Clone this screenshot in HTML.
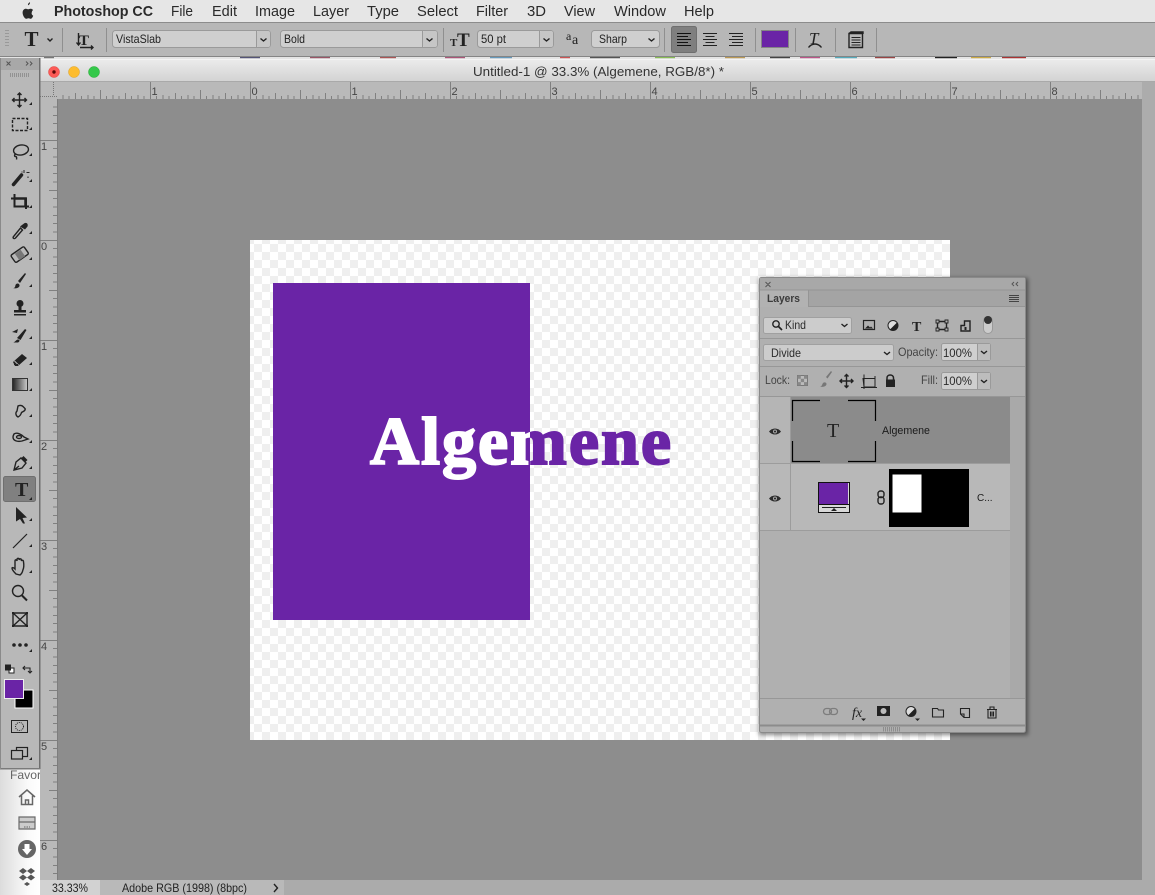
<!DOCTYPE html>
<html><head><meta charset="utf-8"><style>
html,body{margin:0;padding:0;background:#8d8d8d;width:1155px;height:895px;overflow:hidden}
svg{display:block;position:absolute;left:0;top:0}
text{font-family:"Liberation Sans",sans-serif;fill:#262626}
.m{font-size:15px;fill:#2a2a2a}
.o{font-size:12px;fill:#222}
.r{font-size:11px;fill:#444}
.p{font-size:12px;fill:#2b2b2b}
.i{fill:none;stroke:#222;stroke-width:1.4}
.f{fill:#222;stroke:none}
.n{fill:#222;font-family:"Liberation Serif",serif;font-weight:bold}
</style></head><body>
<svg width="1155" height="895" viewBox="0 0 1155 895" xmlns="http://www.w3.org/2000/svg">
<defs>
<pattern id="ck" x="254" y="244" width="16" height="16" patternUnits="userSpaceOnUse"><rect width="16" height="16" fill="#fff"/><rect width="8" height="8" fill="#efefef"/><rect x="8" y="8" width="8" height="8" fill="#efefef"/></pattern>
<pattern id="rt" x="50" y="82" width="100" height="17" patternUnits="userSpaceOnUse">
<rect width="100" height="17" fill="#b9b9b9"/>
<path d="M.5 0V17M50.5 8V17M25.5 11V17M75.5 11V17M13 13V17M38 13V17M63 13V17M88 13V17M6.5 14V17M19 14V17M31.5 14V17M44 14V17M56.5 14V17M69 14V17M81.5 14V17M94 14V17" stroke="#808080" stroke-width="1" fill="none"/></pattern>
<pattern id="rl" x="40" y="40" width="17" height="100" patternUnits="userSpaceOnUse">
<rect width="17" height="100" fill="#b9b9b9"/>
<path d="M0 .5H17M9 50.500H17M13 8.500H17M13 17H17M13 25.500H17M13 33.500H17M13 42H17M13 58.500H17M13 67H17M13 75.500H17M13 83.500H17M13 92H17" stroke="#808080" stroke-width="1" fill="none"/></pattern>
<linearGradient id="tb" x1="0" y1="0" x2="0" y2="1"><stop offset="0" stop-color="#ececec"/><stop offset="1" stop-color="#d2d2d2"/></linearGradient>
<linearGradient id="sb" x1="0" y1="0" x2="1" y2="0"><stop offset="0" stop-color="#dcdcdc"/><stop offset=".7" stop-color="#fafafa"/><stop offset="1" stop-color="#fff"/></linearGradient>
<linearGradient id="gr" x1="0" y1="0" x2="1" y2="0"><stop offset="0" stop-color="#222"/><stop offset="1" stop-color="#ccc"/></linearGradient>
<filter id="sh" x="-5%" y="-5%" width="110%" height="110%"><feGaussianBlur stdDeviation="2"/></filter>
<clipPath id="cl"><rect x="300" y="380" width="230" height="120"/></clipPath>
<clipPath id="cr"><rect x="530" y="380" width="230" height="120"/></clipPath>
<clipPath id="fav"><rect x="0" y="768" width="40" height="127"/></clipPath>
</defs>

<!-- base -->
<rect width="1155" height="895" fill="#8d8d8d"/>

<!-- menu bar -->
<rect width="1155" height="22" fill="#e6e6e6"/>
<rect y="22" width="1155" height="1" fill="#8c8c8c"/>
<path d="M28 5.200c-.2-1.400.8-2.600 2-3 .2 1.400-.8 2.700-2 3zM31.800 12.300c.1-1.500 1.200-2.200 1.300-2.300-.8-1.100-1.900-1.300-2.400-1.300-1.100-.1-1.900.6-2.500.6-.6 0-1.300-.6-2.300-.6-1.600 0-3.300 1.300-3.300 3.900 0 2.600 2 6.200 3.700 6.200.8 0 1.200-.6 2.200-.6 1 0 1.300.6 2.200.6 1.100 0 2.100-1.900 2.500-3.100-1.300-.5-1.600-1.700-1.600-2.400z" fill="#2a2a2a"/>
<text x="54" y="16" class="m" textLength="99" lengthAdjust="spacingAndGlyphs" style="font-weight:bold">Photoshop CC</text>
<text x="171" y="16" class="m" textLength="22" lengthAdjust="spacingAndGlyphs">File</text>
<text x="212" y="16" class="m" textLength="25" lengthAdjust="spacingAndGlyphs">Edit</text>
<text x="255" y="16" class="m" textLength="40" lengthAdjust="spacingAndGlyphs">Image</text>
<text x="313" y="16" class="m" textLength="36" lengthAdjust="spacingAndGlyphs">Layer</text>
<text x="367" y="16" class="m" textLength="32" lengthAdjust="spacingAndGlyphs">Type</text>
<text x="417" y="16" class="m" textLength="41" lengthAdjust="spacingAndGlyphs">Select</text>
<text x="476" y="16" class="m" textLength="32" lengthAdjust="spacingAndGlyphs">Filter</text>
<text x="527" y="16" class="m" textLength="19" lengthAdjust="spacingAndGlyphs">3D</text>
<text x="564" y="16" class="m" textLength="31" lengthAdjust="spacingAndGlyphs">View</text>
<text x="614" y="16" class="m" textLength="52" lengthAdjust="spacingAndGlyphs">Window</text>
<text x="684" y="16" class="m" textLength="30" lengthAdjust="spacingAndGlyphs">Help</text>

<!-- options bar -->
<rect y="23" width="1155" height="33" fill="#b7b7b7"/>
<rect y="56" width="1155" height="1" fill="#858585"/>
<rect y="57" width="1155" height="2" fill="#e4e4e4"/>
<g>
<rect x="44" y="57" width="10" height="1.200" fill="#777"/><rect x="240" y="57" width="20" height="1.200" fill="#557"/><rect x="310" y="57" width="20" height="1.200" fill="#956"/><rect x="380" y="57" width="16" height="1.200" fill="#a55"/><rect x="445" y="57" width="20" height="1.200" fill="#a57"/><rect x="490" y="57" width="22" height="1.200" fill="#69b"/><rect x="560" y="57" width="10" height="1.200" fill="#c55"/><rect x="590" y="57" width="30" height="1.200" fill="#555"/><rect x="655" y="57" width="20" height="1.200" fill="#8b5"/><rect x="725" y="57" width="20" height="1.200" fill="#b95"/><rect x="770" y="57" width="20" height="1.200" fill="#444"/><rect x="800" y="57" width="20" height="1.200" fill="#b58"/><rect x="835" y="57" width="22" height="1.200" fill="#5ab"/><rect x="875" y="57" width="20" height="1.200" fill="#944"/><rect x="935" y="57" width="22" height="1.200" fill="#222"/><rect x="971" y="57" width="20" height="1.200" fill="#ca4"/><rect x="1002" y="57" width="24" height="1.200" fill="#a33"/>
</g>
<!-- grip -->
<path d="M5 30.500H9M5 33.500H9M5 36.500H9M5 39.500H9M5 42.500H9M5 45.500H9" stroke="#999" fill="none"/>
<!-- T tool -->
<text x="24.500" y="46" class="n" style="font-size:21px">T</text>
<path d="M47.500 38.500l2.500 2.500 2.500-2.500" class="i" stroke-width="1"/>
<path d="M62.500 28V52M106.500 28V52M443.500 28V52M664.500 28V52M755.500 28V52M795.500 28V52M835.500 28V52M876.500 28V52" stroke="#8f8f8f" fill="none"/>
<text x="79" y="45" class="n" style="font-size:15px">T</text>
<path d="M78.500 33V45M76.500 42.500l2 2.500 2-2.500M80 47.500H93M91 45.500l2 2-2 2" class="i" stroke-width="1.100"/>
<!-- combos -->
<g fill="#cfcfcf" stroke="#9a9a9a">
<rect x="112.500" y="30.500" width="158" height="17" rx="3"/>
<rect x="280.500" y="30.500" width="157" height="17" rx="3"/>
<rect x="477.500" y="30.500" width="76" height="17" rx="3"/>
<rect x="591.500" y="30.500" width="68" height="17" rx="3"/>
</g>
<path d="M256.500 31V47M422.500 31V47M539.500 31V47" stroke="#9a9a9a" fill="none"/>
<rect x="257" y="31" width="13" height="16" rx="2" fill="#c6c6c6"/><rect x="423" y="31" width="14" height="16" rx="2" fill="#c6c6c6"/><rect x="540" y="31" width="13" height="16" rx="2" fill="#c6c6c6"/>
<path d="M260.500 38.500l3 2.500 3-2.500M426.500 38.500l3 2.500 3-2.500M543.500 38.500l3 2.500 3-2.500M648.500 38.500l3 2.500 3-2.500" class="i" stroke-width="1"/>
<text x="116" y="43" class="o" textLength="45" lengthAdjust="spacingAndGlyphs">VistaSlab</text>
<text x="284" y="43" class="o" textLength="21" lengthAdjust="spacingAndGlyphs">Bold</text>
<text x="481" y="43" class="o" textLength="25" lengthAdjust="spacingAndGlyphs">50 pt</text>
<text x="599" y="43" class="o" textLength="28" lengthAdjust="spacingAndGlyphs">Sharp</text>
<!-- TT size -->
<text x="450" y="46" class="n" style="font-size:11px">T</text>
<text x="457" y="46" class="n" style="font-size:19px">T</text>
<!-- aa -->
<text x="566" y="40" class="o" style="font-family:'Liberation Serif',serif;font-size:12px">a</text>
<text x="572" y="44" class="o" style="font-family:'Liberation Serif',serif;font-size:14px">a</text>
<!-- align -->
<rect x="671.500" y="26.500" width="25" height="26" rx="2" fill="#7f7f7f" stroke="#6f6f6f"/>
<path d="M677 33.500H691M677 36.500H688M677 39.500H691M677 42.500H688M677 45.500H691" stroke="#111" fill="none"/>
<path d="M703 33.500H717M705.500 36.500H714.500M703 39.500H717M705.500 42.500H714.500M703 45.500H717" stroke="#222" fill="none"/>
<path d="M729 33.500H743M732 36.500H743M729 39.500H743M732 42.500H743M729 45.500H743" stroke="#222" fill="none"/>
<!-- swatch -->
<rect x="761.500" y="30.500" width="27" height="17" fill="#6a24a6" stroke="#858585"/>
<!-- warp -->
<text x="809" y="44" class="o" style="font-family:'Liberation Serif',serif;font-size:17px;font-style:italic">T</text>
<path d="M808.500 47.500c2-2.500 4-3.500 6.500-3.500s4.500 1 6.500 3.500" class="i" stroke-width="1.200"/>
<!-- char panel -->
<path d="M849 33.500H862.500V47.500H849ZM849 33.500l2-1.500H863v2" class="i"/>
<path d="M851.500 37.500H860.500M851.500 40H860.500M851.500 42.500H860.500M851.500 45H860.500" stroke="#222" fill="none"/>

<!-- document window -->
<rect x="40" y="59" width="1115" height="23" fill="url(#tb)"/>
<rect x="40" y="59" width="1115" height="1" fill="#f4f4f4"/>
<rect x="40" y="81" width="1115" height="1" fill="#a9a9a9"/>
<circle cx="54" cy="72" r="5.500" fill="#fc5b57" stroke="#e0443e" stroke-width=".5"/><circle cx="54" cy="72" r="1.700" fill="#5a0a08"/>
<circle cx="74" cy="72" r="5.500" fill="#fdbc2e" stroke="#dea123" stroke-width=".5"/>
<circle cx="94" cy="72" r="5.500" fill="#34c84a" stroke="#27aa35" stroke-width=".5"/>
<text x="473" y="76" style="font-size:13px;fill:#333" textLength="251" lengthAdjust="spacingAndGlyphs">Untitled-1 @ 33.3% (Algemene, RGB/8*) *</text>

<!-- rulers -->
<rect x="1142" y="82" width="13" height="798" fill="#acacac"/>
<rect x="57" y="82" width="1085" height="17" fill="url(#rt)"/>
<rect x="40" y="99" width="17" height="781" fill="url(#rl)"/>
<rect x="40" y="82" width="17" height="17" fill="#b9b9b9"/>
<path d="M53.500 82V96M40 96.500H57" stroke="#777" stroke-dasharray="1 1" fill="none"/>
<rect x="57" y="99" width="1" height="781" fill="#7d7d7d"/>
<g class="r">
<text x="151.500" y="95" class="r">1</text><text x="251.500" y="95" class="r">0</text><text x="351.500" y="95" class="r">1</text><text x="451.500" y="95" class="r">2</text><text x="551.500" y="95" class="r">3</text><text x="651.500" y="95" class="r">4</text><text x="751.500" y="95" class="r">5</text><text x="851.500" y="95" class="r">6</text><text x="951.500" y="95" class="r">7</text><text x="1051.500" y="95" class="r">8</text>
<text x="41" y="150" class="r">1</text><text x="41" y="250" class="r">0</text><text x="41" y="350" class="r">1</text><text x="41" y="450" class="r">2</text><text x="41" y="550" class="r">3</text><text x="41" y="650" class="r">4</text><text x="41" y="750" class="r">5</text><text x="41" y="850" class="r">6</text>
</g>

<!-- canvas doc -->
<rect x="250" y="240" width="700" height="500" fill="url(#ck)"/>
<rect x="273" y="283" width="257" height="337" fill="#6a24a6"/>
<text x="370" y="464" textLength="301" clip-path="url(#cl)" style="font-family:'Liberation Serif',serif;font-weight:bold;font-size:68px;fill:#fff;stroke:#fff;stroke-width:2">Algemene</text>
<text x="370" y="464" textLength="301" clip-path="url(#cr)" style="font-family:'Liberation Serif',serif;font-weight:bold;font-size:68px;fill:#6a24a6;stroke:#6a24a6;stroke-width:2">Algemene</text>

<!-- status bar -->
<rect x="40" y="880" width="1115" height="15" fill="#ababab"/>
<rect x="40" y="880" width="60" height="15" fill="#d2d2d2"/>
<rect x="100" y="880" width="184" height="15" fill="#b9b9b9"/>
<text x="52" y="892" class="o" textLength="36" lengthAdjust="spacingAndGlyphs">33.33%</text>
<text x="122" y="892" class="o" textLength="125" lengthAdjust="spacingAndGlyphs">Adobe RGB (1998) (8bpc)</text>
<path d="M274 884l3.500 4-3.500 4" class="i" stroke-width="1.200"/>

<!-- sidebar -->
<rect x="0" y="768" width="40" height="127" fill="url(#sb)"/>
<g clip-path="url(#fav)">
<text x="10" y="779" style="font-size:12px;fill:#666" textLength="50" lengthAdjust="spacingAndGlyphs">Favorites</text>
</g>
<path d="M19 797L27 790 35 797M21.500 795.500V804.500H32.500V795.500M25.500 804.500V800H28.500V804.500" fill="none" stroke="#666" stroke-width="1.500"/>
<path d="M19 817h16v12H19zM19 822H35" fill="#ccc" stroke="#6a6a6a" stroke-width="1.200"/><path d="M24 827h6" stroke="#666" stroke-dasharray="1.500 1"/>
<circle cx="27" cy="849" r="9" fill="#666"/><path d="M24.500 844H29.500V849H32L27 855 22 849H24.500Z" fill="#fff"/>
<path d="M23 868l4 3-4 3-4-3zM31 868l4 3-4 3-4-3zM23 874.500l4 3-4 3-4-3zM31 874.500l4 3-4 3-4-3zM27 882l3 2-3 2-3-2z" fill="#555"/>

<!-- tools panel -->
<rect x="0" y="58" width="39" height="710" fill="#b8b8b8"/>
<rect x="0" y="58" width="39" height="12" fill="#a8a8a8"/>
<rect x="39" y="58" width="1.500" height="711" fill="#6e6e6e"/>
<rect x="0" y="768" width="40" height="1.500" fill="#7a7a7a"/>
<rect x="0" y="58" width="1" height="711" fill="#8a8a8a"/>
<path d="M6.500 61.500l4 4M10.500 61.500l-4 4M26 61.500l2 2-2 2M30 61.500l2 2-2 2" stroke="#555" fill="none"/>
<path d="M10.500 73V77M12.500 73V77M14.500 73V77M16.500 73V77M18.500 73V77M20.500 73V77M22.500 73V77M24.500 73V77M26.500 73V77M28.500 73V77" stroke="#929292" fill="none"/>

<!-- tool corner marks -->
<path d="M32 102v3h-3zM32 127v3h-3zM32 153v3h-3zM32 179v3h-3zM32 205v3h-3zM32 231v3h-3zM32 257v3h-3zM32 284v3h-3zM32 310v3h-3zM32 336v3h-3zM32 362v3h-3zM32 388v3h-3zM32 414v3h-3zM32 440v3h-3zM32 466v3h-3zM32 492v3h-3zM32 518v3h-3zM32 544v3h-3zM32 570v3h-3zM32 649v3h-3zM32 757v3h-3z" fill="#222"/>

<!-- move -->
<path d="M19.500 93V107M12.500 100H26.500M17.500 95l2-2 2 2M17.500 105l2 2 2-2M14.500 98l-2 2 2 2M24.500 98l2 2-2 2" class="i"/>
<!-- marquee -->
<rect x="12.500" y="118.500" width="15" height="12" class="i" stroke-dasharray="3 1.500"/>
<!-- lasso -->
<ellipse cx="21" cy="150" rx="7.500" ry="5" class="i" transform="rotate(-10 21 150)"/><path d="M15.500 154c-1.500 1-1 2.500 0 2.500s1.500 1 1 3" class="i"/>
<!-- wand -->
<path d="M13.500 184.500L21.500 175" stroke="#222" stroke-width="3.500" stroke-linecap="round" fill="none"/><path d="M24 170v3M26.500 172.500h3M22 171.500v1M28 176.500v1.500" stroke="#222" fill="none"/>
<!-- crop -->
<path d="M11 198.500H26V209M14.500 194V206.500H29" fill="none" stroke="#222" stroke-width="2"/><path d="M14.500 198.500H25.500V206" fill="none" stroke="#222" stroke-width="2.500"/>
<!-- eyedropper -->
<path d="M14 236c-2 2 0 3.500 1.500 2l7-8-2-2z" class="i"/><path d="M20 226.500l5 3 2.500-3c1-3-1.500-4.500-3.500-3z" class="f"/>
<!-- heal -->
<rect x="12" y="250" width="16" height="9" rx="1.500" transform="rotate(-35 20 255)" class="i"/><rect x="16.500" y="251" width="7" height="8" transform="rotate(-35 20 255)" fill="#777"/>
<!-- brush -->
<path d="M18 281l7-8 1 1-6 9z" class="f"/><path d="M13 288c2 0 2-1 2.500-3 .8-2 3.500-2 4 0 .5 2.500-3 4-6.500 3z" class="f"/>
<!-- stamp -->
<circle cx="20" cy="303.500" r="3.500" class="f"/><path d="M18.500 306h3v4h4.500v2.500H14V310h4.500zM14 314h12v1.500H14z" class="f"/>
<!-- history brush -->
<path d="M17 338l8-9 1.500 1-6 10zM13 342.500c2 0 3-3 5-3s2 2 0 3z" class="f"/><path d="M12 332l6-3 -1 4zM27 335v1M28 339v1" class="f"/>
<!-- eraser -->
<path d="M13 362l9-8 5 4-9 8h-3z" class="f"/><path d="M14.500 361l4 4" stroke="#b8b8b8" fill="none"/><path d="M14 364.500l4 0" stroke="#222" fill="none"/>
<!-- gradient -->
<rect x="12.500" y="378.500" width="15" height="12" fill="url(#gr)" stroke="#333"/>
<!-- smudge -->
<path d="M18 417c-2-1-3-4-1-6l1-5c2-1 4-.5 5 .5l2 2c1 2-2 3-3.500 4-.5 2-1.500 3.500-3.500 4.500z" class="i"/>
<!-- dodge -->
<path d="M14 434c3-2 7 0 10 3l4 2-6 2c-4 1-9 0-9-4 0-1 .5-2 1-3z" class="i"/><ellipse cx="19" cy="437" rx="2.500" ry="1.500" class="i"/>
<!-- pen -->
<path d="M14 470l2-8 5-4 5 5-4 5zM14 470l5-4" class="i"/><path d="M21.500 458l2-2 4 4-2 2z" class="f"/>
<!-- type selected -->
<rect x="3.500" y="476.500" width="32" height="25" rx="2" fill="#808080" stroke="#6f6f6f"/>
<text x="15" y="496" class="n" style="font-size:20px">T</text>
<path d="M32 497v3h-3z" fill="#222"/>
<!-- direct select -->
<path d="M16 507L27 517.500 22.500 518 25 523.500H23L20 519 16 521.500Z" class="f"/>
<!-- line -->
<path d="M13 548L27 534" stroke="#222" stroke-width="1.200" fill="none"/>
<!-- hand -->
<path d="M16 574c-2-2-4-4-4-6 .5-1 2 0 3 1v-8c0-1.500 1.800-1.500 2 0v-1.500c.2-1.500 2-1.500 2.200 0v.5c.2-1.500 2-1.500 2.200 0v1c.3-1 1.800-1 2 0 .5 3 .5 7-.5 9-.4 2-1.500 4-2.900 5z" class="i" stroke-width="1.200"/>
<!-- zoom -->
<circle cx="18" cy="591" r="5.500" class="i"/><path d="M22 595.500L27 600.500" stroke="#222" stroke-width="2" fill="none"/>
<!-- frame -->
<path d="M13 613H27V626H13ZM13 613L27 626M27 613L13 626" class="i" stroke-width="1.200"/><path d="M12 612h2v2h-2zM26 612h2v2h-2zM12 625h2v2h-2zM26 625h2v2h-2z" class="f"/>
<!-- dots -->
<circle cx="14" cy="645" r="1.800" class="f"/><circle cx="20" cy="645" r="1.800" class="f"/><circle cx="26" cy="645" r="1.800" class="f"/>
<!-- default/switch -->
<rect x="9" y="668" width="5" height="5" fill="#fff" stroke="#222"/><rect x="5" y="664.500" width="6" height="6" fill="#222"/>
<path d="M23 668H30V672M25 666l-2 2 2 2M28 671l2 2 2-2" fill="none" stroke="#222" stroke-width="1.100"/>
<!-- colors -->
<rect x="15" y="690" width="18" height="18" fill="#000" stroke="#fff"/>
<rect x="4.500" y="679.500" width="19" height="19" fill="#6a24a6" stroke="#eee"/>
<!-- quick mask -->
<rect x="11.500" y="720.500" width="16" height="12" fill="#b8b8b8" stroke="#222"/><circle cx="19.500" cy="726.500" r="4" fill="none" stroke="#222" stroke-dasharray="1 1"/>
<!-- screen mode -->
<rect x="16.500" y="747.500" width="11" height="9" fill="none" stroke="#222" stroke-width="1.200"/><rect x="11.500" y="750.500" width="11" height="8.500" fill="#b8b8b8" stroke="#222" stroke-width="1.200"/>

<!-- Layers panel -->
<rect x="759" y="278" width="269" height="457" fill="#000" opacity=".45" filter="url(#sh)"/>
<rect x="759.500" y="277.500" width="266" height="455" rx="2" fill="#b0b0b0" stroke="#8a8a8a"/>
<rect x="760" y="278" width="265" height="12" fill="#a8a8a8"/>
<path d="M765.500 282l5 5M770.500 282l-5 5M1014 282l-2 2 2 2M1018 282l-2 2 2 2" stroke="#555" fill="none"/>
<rect x="760" y="290" width="265" height="17" fill="#a4a4a4"/>
<rect x="760" y="290" width="48" height="17" fill="#b2b2b2"/>
<path d="M808.500 290V307M808 306.500H1025M760 290H1025" stroke="#959595" fill="none"/>
<text x="767" y="302" style="font-size:11px;font-weight:bold;fill:#3b3b3b" textLength="33" lengthAdjust="spacingAndGlyphs">Layers</text>
<path d="M1009 295.500H1019M1009 297.500H1019M1009 299.500H1019M1009 301.500H1019" stroke="#444" fill="none"/>
<!-- filter row -->
<path d="M760 338.500H1025M760 366.500H1025M760 396.500H1025M760 698.500H1025" stroke="#979797" fill="none"/>
<rect x="763.500" y="317.500" width="88" height="16" rx="2" fill="#cccccc" stroke="#a0a0a0"/>
<circle cx="776" cy="324" r="3.200" class="i"/><path d="M778.500 326.500L782 330" stroke="#222" stroke-width="1.700"/>
<text x="785" y="329" class="p" textLength="21" lengthAdjust="spacingAndGlyphs">Kind</text>
<path d="M841.500 324l3 2.500 3-2.500" class="i" stroke-width="1"/>
<rect x="863.500" y="320.500" width="11" height="9" fill="none" stroke="#222" stroke-width="1.200"/><path d="M865 328.500l3-3 2 2 1-1 2 2z" class="f"/>
<circle cx="893" cy="325.500" r="5" fill="#ddd" stroke="#222"/><path d="M897 322.500A5 5 0 0 1 890 329.500Z" fill="#222"/>
<text x="912" y="331" class="n" style="font-size:14px">T</text>
<path d="M937.500 321.500H946.500V329.500H937.500Z" class="i"/><path d="M936 320h3v3h-3zM945 320h3v3h-3zM936 328h3v3h-3zM945 328h3v3h-3z" fill="#b0b0b0" stroke="#222" stroke-width=".9"/>
<path d="M964.500 321H970V331H961V325.500H964.500ZM964.500 321V325.500" class="i" stroke-width="1.200"/><rect x="964.500" y="327" width="2" height="3" fill="#222"/>
<rect x="983.500" y="316.500" width="9" height="17" rx="4.500" fill="#ccc" stroke="#999"/><circle cx="988" cy="320" r="4" fill="#333"/>
<!-- blend row -->
<rect x="763.500" y="344.500" width="130" height="16" rx="2" fill="#cccccc" stroke="#a0a0a0"/>
<text x="771" y="357" class="p" textLength="30" lengthAdjust="spacingAndGlyphs">Divide</text>
<path d="M884 352l3 2.500 3-2.500" class="i" stroke-width="1"/>
<text x="898" y="356" class="p" textLength="40" lengthAdjust="spacingAndGlyphs" style="fill:#444">Opacity:</text>
<rect x="941.500" y="343.500" width="49" height="17" rx="2" fill="#cfcfcf" stroke="#9a9a9a"/><path d="M977.500 344V360" stroke="#999"/><rect x="978" y="344" width="12" height="16" fill="#bdbdbd"/>
<text x="943" y="357" class="p" textLength="29" lengthAdjust="spacingAndGlyphs">100%</text>
<path d="M981 351l3 2.500 3-2.500" class="i" stroke-width="1"/>
<!-- lock row -->
<text x="765" y="384" class="p" textLength="25" lengthAdjust="spacingAndGlyphs" style="fill:#444">Lock:</text>
<rect x="797.500" y="375.500" width="10" height="10" fill="#bbb" stroke="#777"/><path d="M797.500 375.500h3.300v3.300h-3.300zM804 375.500h3.300v3.300h-3.300zM800.800 378.800h3.300v3.300h-3.300zM797.500 382.100h3.300v3.300h-3.300zM804 382.100h3.300v3.300h-3.300z" fill="#888"/>
<path d="M826 377l5-6 1 1-4.500 6.500zM820 386.500c2 0 2-2 3-3.500 1-1 3.500-1 3.500 1 0 2-3 3.500-6.500 2.500z" fill="#777"/>
<path d="M846.500 374.500V387.500M840 381H853M844.500 376.500l2-2 2 2M844.500 385.500l2 2 2-2M842 379l-2 2 2 2M851 379l2 2-2 2" class="i" stroke-width="1.200"/>
<path d="M863 378.500H875V387H864ZM861 387.500H877M864 374.500V389M875 376V381" fill="none" stroke="#222" stroke-width="1"/>
<path d="M887 380v-2c0-4 6.500-4 6.500 0v2" fill="none" stroke="#222" stroke-width="1.500"/><rect x="886" y="379.500" width="9" height="7.500" fill="#222"/>
<text x="921" y="384" class="p" textLength="17" lengthAdjust="spacingAndGlyphs" style="fill:#444">Fill:</text>
<rect x="941.500" y="372.500" width="49" height="17" rx="2" fill="#cfcfcf" stroke="#9a9a9a"/><path d="M977.500 373V389" stroke="#999"/><rect x="978" y="373" width="12" height="16" fill="#bdbdbd"/>
<text x="943" y="385" class="p" textLength="29" lengthAdjust="spacingAndGlyphs">100%</text>
<path d="M981 380l3 2.500 3-2.500" class="i" stroke-width="1"/>
<!-- layers list -->
<rect x="1010" y="397" width="15" height="301" fill="#a9a9a9"/>
<rect x="760" y="397" width="31" height="66" fill="#b5b5b5"/>
<rect x="791" y="397" width="219" height="66" fill="#8b8b8b"/>
<rect x="760" y="464" width="250" height="66" fill="#b8b8b8"/>
<path d="M760 463.500H1010M760 530.500H1010M790.500 397V530" stroke="#9c9c9c" fill="none"/>
<!-- eyes -->
<path d="M769 431.500c3-4 9-4 12 0-3 4-9 4-12 0z" fill="#2c2c2c"/><circle cx="775" cy="431.500" r="2" fill="#aaa"/><circle cx="775" cy="431.500" r="1" fill="#222"/>
<path d="M769 498.500c3-4 9-4 12 0-3 4-9 4-12 0z" fill="#2c2c2c"/><circle cx="775" cy="498.500" r="2" fill="#aaa"/><circle cx="775" cy="498.500" r="1" fill="#222"/>
<!-- T thumb -->
<path d="M792.500 421V400.500H820M848 400.500H875.500V421M792.500 441V461.500H820M848 461.500H875.500V441" fill="none" stroke="#000" stroke-width="1.200"/>
<text x="827" y="437" style="font-family:'Liberation Serif',serif;font-size:20px;fill:#222">T</text>
<text x="882" y="434" style="font-size:11px;fill:#1a1a1a" textLength="48" lengthAdjust="spacingAndGlyphs">Algemene</text>
<!-- fill thumb -->
<rect x="818.500" y="482.500" width="31" height="30" fill="#d8d8d8" stroke="#111"/>
<rect x="819" y="483" width="29" height="21" fill="#6a24a6"/>
<path d="M822 507.500H846" stroke="#222" fill="none"/><path d="M834 508l3 3h-6z" fill="#222"/>
<path d="M818 504.500H850" stroke="#111" fill="none"/>
<!-- chain -->
<rect x="878" y="491" width="6" height="6.500" rx="2.500" fill="none" stroke="#222" stroke-width="1.400"/><rect x="878" y="497" width="6" height="7" rx="2.500" fill="none" stroke="#222" stroke-width="1.400"/>
<!-- mask -->
<rect x="889" y="469" width="80" height="58" fill="#000"/>
<rect x="892.500" y="474.500" width="29" height="38" fill="#fff"/>
<text x="977" y="501" style="font-size:10px;fill:#1a1a1a">C...</text>
<!-- bottom bar -->
<path d="M760 725.500H1025" stroke="#8c8c8c" stroke-width="2" fill="none"/>
<path d="M883.500 727V731.500M885.500 727V731.500M887.500 727V731.500M889.500 727V731.500M891.500 727V731.500M893.500 727V731.500M895.500 727V731.500M897.500 727V731.500M899.500 727V731.500" stroke="#8d8d8d" fill="none"/>
<rect x="823.500" y="708.500" width="8" height="6" rx="3" fill="none" stroke="#7d7d7d" stroke-width="1.300"/><rect x="829.500" y="708.500" width="8" height="6" rx="3" fill="none" stroke="#7d7d7d" stroke-width="1.300"/>
<text x="852" y="717" style="font-family:'Liberation Serif',serif;font-style:italic;font-size:14px;fill:#222">fx</text>
<path d="M861 718.500h5l-2.500 2.500z" fill="#222"/>
<rect x="877" y="706" width="13" height="10" fill="#222"/><circle cx="883.500" cy="711" r="3" fill="#bbb"/>
<circle cx="911" cy="711.500" r="5" fill="#ddd" stroke="#222"/><path d="M915 708.500A5 5 0 0 1 908 715.500Z" fill="#222"/><path d="M915 718.500h5l-2.500 2.500z" fill="#222"/>
<path d="M932.500 708.500H937.500L938.500 710H943.500V717H932.500Z" fill="#b0b0b0" stroke="#222" stroke-width="1.100"/>
<path d="M960.500 708.500H969.500V717.500H964L960.500 714ZM960.500 714H964V717.500" fill="#b0b0b0" stroke="#222" stroke-width="1.100"/>
<path d="M987 709.500H997M988 710V718H996V710M990.500 711.500V716.500M992 711.500V716.500M993.500 711.500V716.500M990 709V707H994V709" fill="none" stroke="#222" stroke-width="1.100"/>
</svg>
</body></html>
